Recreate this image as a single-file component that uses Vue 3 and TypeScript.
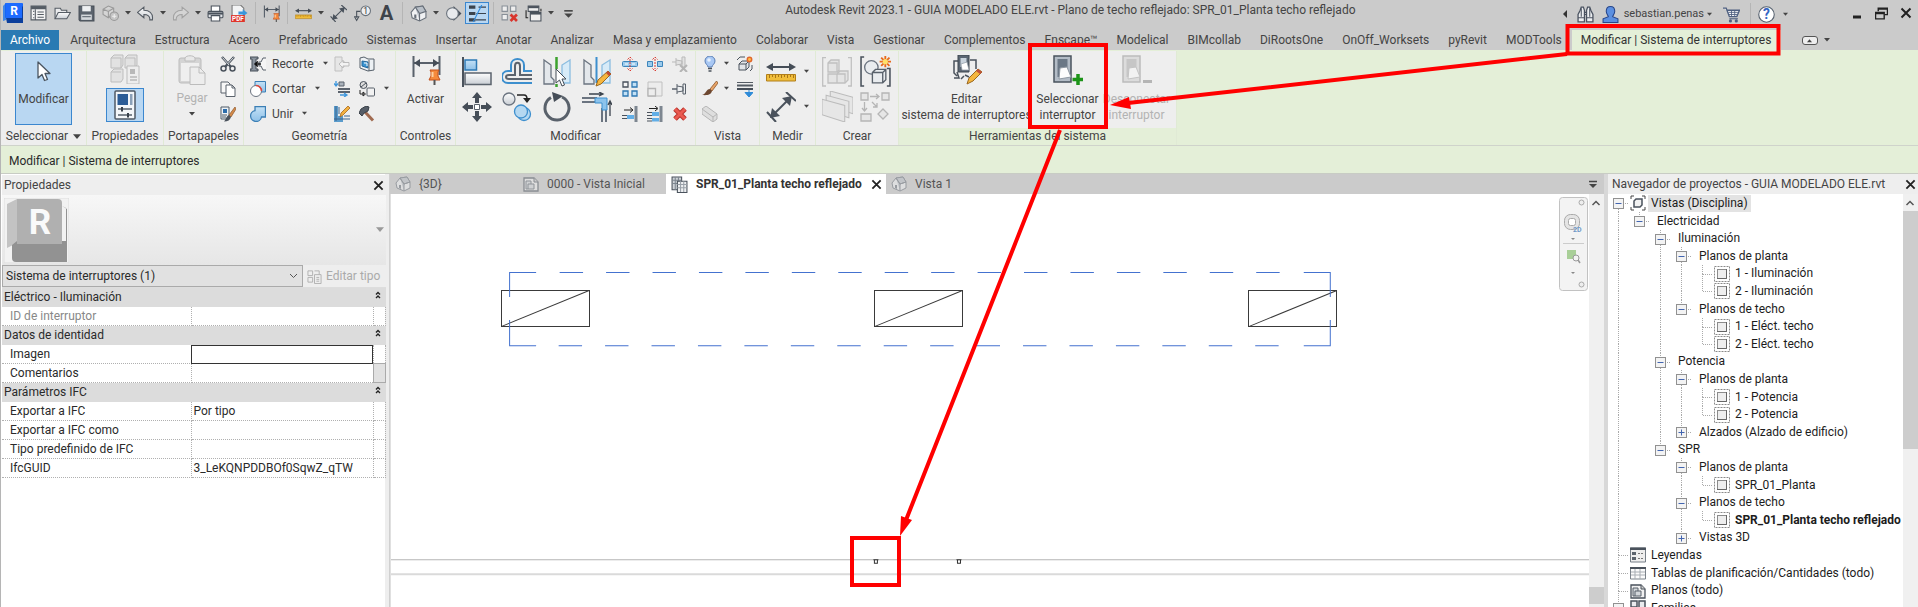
<script setup lang="ts">
import { h } from 'vue'

const Ico = (props: { n: string; s?: number }) =>
  h('svg', { width: props.s ?? 16, height: props.s ?? 16, 'aria-hidden': 'true', style: 'display:block;flex:none' }, [
    h('use', { href: '#' + props.n }),
  ])
Ico.props = ['n', 's']

interface QuickItem { kind: 'icon' | 'drop' | 'sep'; icon?: string; label?: string; on?: boolean }
const q = (icon: string, label: string, on = false): QuickItem => ({ kind: 'icon', icon, label, on })
const drop: QuickItem = { kind: 'drop', label: 'Más opciones' }
const sep: QuickItem = { kind: 'sep' }
const quick: QuickItem[] = [
  q('list', 'Inicio'), q('open', 'Abrir'), q('save', 'Guardar'), q('sync', 'Sincronizar'), drop,
  q('undo', 'Deshacer'), drop, q('redo', 'Rehacer'), drop, q('print', 'Imprimir'), q('pdf', 'Exportar PDF'), sep,
  q('dimpin', 'Activar controles'), sep, q('ruler', 'Medir'), drop, q('dim', 'Cota alineada'), q('tag', 'Etiqueta'),
  q('text', 'Texto'), sep, q('house', 'Vista 3D'), drop, q('section', 'Sección'), q('thin', 'Líneas finas', true), sep,
  q('closeviews', 'Cerrar inactivas'), q('switch', 'Cambiar ventanas'), drop, q('more', 'Personalizar'),
]

const tabs = [
  'Arquitectura', 'Estructura', 'Acero', 'Prefabricado', 'Sistemas', 'Insertar', 'Anotar', 'Analizar',
  'Masa y emplazamiento', 'Colaborar', 'Vista', 'Gestionar', 'Complementos', 'Enscape™', 'Modelical',
  'BIMcollab', 'DiRootsOne', 'OnOff_Worksets', 'pyRevit', 'MODTools',
]

const bigModify = [
  ['align', 'Alinear'], ['offset', 'Desfase'], ['mirrorpick', 'Reflejar eje'], ['mirrordraw', 'Reflejar dibujo'],
  ['move', 'Desplazar'], ['copyobj', 'Copiar'], ['rotate', 'Girar'], ['trim', 'Recortar'],
]
const smallModify = [
  ['split', 'Dividir'], ['splitgap', 'Dividir con hueco'], ['unpin', 'Desbloquear'],
  ['array', 'Matriz'], ['scale', 'Escala'], ['pin', 'Bloquear'],
  ['ext1', 'Extender uno'], ['ext2', 'Extender varios'], ['del', 'Suprimir'],
]

interface Prop { name: string; value?: string; off?: boolean; box?: boolean; btn?: boolean }
const groups: { title: string; rows: Prop[] }[] = [
  { title: 'Eléctrico - Iluminación', rows: [{ name: 'ID de interruptor', off: true }] },
  { title: 'Datos de identidad', rows: [{ name: 'Imagen', box: true }, { name: 'Comentarios', btn: true }] },
  {
    title: 'Parámetros IFC',
    rows: [
      { name: 'Exportar a IFC', value: 'Por tipo' }, { name: 'Exportar a IFC como' },
      { name: 'Tipo predefinido de IFC' }, { name: 'IfcGUID', value: '3_LeKQNPDDBOf0SqwZ_qTW' },
    ],
  },
]

// Guide codes, one per indent column: m/M/v minus box, P plus box, t tee, l elbow, | line, . empty
interface Node { g: string; text: string; icon?: string; bold?: boolean; sel?: boolean }
const tree: Node[] = [
  { g: 'v', text: 'Vistas (Disciplina)', icon: 'views', sel: true },
  { g: '|M', text: 'Electricidad' },
  { g: '|.m', text: 'Iluminación' },
  { g: '|.|m', text: 'Planos de planta' },
  { g: '|.||t', text: '1 - Iluminación', icon: 'plan' },
  { g: '|.||l', text: '2 - Iluminación', icon: 'plan' },
  { g: '|.|M', text: 'Planos de techo' },
  { g: '|.|.t', text: '1 - Eléct. techo', icon: 'plan' },
  { g: '|.|.l', text: '2 - Eléct. techo', icon: 'plan' },
  { g: '|.m', text: 'Potencia' },
  { g: '|.|m', text: 'Planos de planta' },
  { g: '|.||t', text: '1 - Potencia', icon: 'plan' },
  { g: '|.||l', text: '2 - Potencia', icon: 'plan' },
  { g: '|.|P', text: 'Alzados (Alzado de edificio)' },
  { g: '|.M', text: 'SPR' },
  { g: '|..m', text: 'Planos de planta' },
  { g: '|..|l', text: 'SPR_01_Planta', icon: 'plan' },
  { g: '|..m', text: 'Planos de techo' },
  { g: '|..|l', text: 'SPR_01_Planta techo reflejado', icon: 'plan', bold: true },
  { g: '|..P', text: 'Vistas 3D' },
  { g: 't', text: 'Leyendas', icon: 'legend' },
  { g: 't', text: 'Tablas de planificación/Cantidades (todo)', icon: 'table' },
  { g: 't', text: 'Planos (todo)', icon: 'sheet' },
  { g: 'm', text: 'Familias', icon: 'family' },
]
const up = (c: string) => 'mMPtl|'.includes(c)
const down = (c: string) => 'mvt|'.includes(c)
const stub = (c: string) => 'mMPvtl'.includes(c)
const box = (c: string) => 'mMPv'.includes(c)
</script>

<template>
  <div class="app">
    <svg class="defs" aria-hidden="true">
      <defs>
        <linearGradient id="gr" x2="0" y2="1"><stop offset="0" stop-color="#fdfdfd" /><stop offset="1" stop-color="#c9ced4" /></linearGradient>
        <linearGradient id="gb" x2="0" y2="1"><stop offset="0" stop-color="#c4e1f6" /><stop offset="1" stop-color="#8fc1e8" /></linearGradient>
      </defs>
    </svg>
    <svg class="symbols" aria-hidden="true">
      <symbol id="logo" viewBox="0 0 22 22"><path d="M0 4L3 1V18L0 19z" fill="#3f86e8" /><rect x="2" y="1" width="18" height="15" rx="1" fill="#1565f5" /><path d="M3 16H18V3L20 5V21H4z" fill="#0c3f9c" /><path d="M3 1H19V16H3z" fill="#1d6bff" /><text x="11" y="13" text-anchor="middle" font-family="Roboto, sans-serif" font-weight="700" font-size="12" fill="#fff">R</text></symbol>
      <symbol id="list" viewBox="0 0 16 16"><path d="M1 1H15V14H1z" fill="#f4f4f4" stroke="#555c64" /><path d="M1 1H15V4H1z" fill="#555c64" /><path d="M5 4V14M3 6h1M3 9h1M3 12h1M7 6.500h6M7 9h6M7 11.500h6" stroke="#555c64" /></symbol>
      <symbol id="open" viewBox="0 0 16 16"><path d="M1 13V3H6L7 5H12V7" fill="#e9eaec" stroke="#555c64" /><path d="M1 13L4 7H15.500L12 13z" fill="url(#gr)" stroke="#555c64" /></symbol>
      <symbol id="save" viewBox="0 0 16 16"><path d="M1 1H15V15H2L1 14z" fill="#5b636d" stroke="#474e57" /><path d="M4 1H12V6H4z" fill="#eef0f2" /><path d="M3 9H13V14H3z" fill="#d4d8dc" /><path d="M4 11H12" stroke="#5b636d" /></symbol>
      <symbol id="sync" viewBox="0 0 16 16"><path d="M1 4L6 1L11 3V8L6 12L1 9zM1 4L6 6L11 3M6 6V12" fill="#d5d5d5" stroke="#9a9a9a" /><circle cx="11.500" cy="10.500" r="4" fill="#c4c4c4" stroke="#989898" /><path d="M9.500 10.500h4m-2-2v4" stroke="#eee" /></symbol>
      <symbol id="undo" viewBox="0 0 16 16"><path d="M0.500 7L6.500 2V5C11 5 15.500 7 14.500 14H12C12.500 10.500 10 9 6.500 9V12z" fill="url(#gr)" stroke="#555c64" /></symbol>
      <symbol id="redo" viewBox="0 0 16 16"><path d="M15.500 7L9.500 2V5C5 5 0.500 7 1.500 14H4C3.500 10.500 6 9 9.500 9V12z" fill="#d4d4d4" stroke="#a2a2a2" /></symbol>
      <symbol id="print" viewBox="0 0 16 16"><path d="M4 6V1H12V6" fill="#fff" stroke="#4a525c" /><rect x="1" y="6" width="14" height="6" rx="1" fill="#dfe2e6" stroke="#4a525c" /><path d="M1 7H15V9H1z" fill="#4a525c" /><path d="M4 10H12V15H4z" fill="#fff" stroke="#4a525c" /></symbol>
      <symbol id="pdf" viewBox="0 0 16 16"><path d="M1 0H9L12 3V16H1z" fill="#f3f4f5" stroke="#777" /><path d="M7 6H11V4L15.500 7.500L11 11V9H7z" fill="#3a96db" /><path d="M0 9.500H13V16H0z" fill="#e0352b" /><text x="6.500" y="15" text-anchor="middle" font-family="Roboto, sans-serif" font-weight="700" font-size="6" fill="#fff">PDF</text></symbol>
      <symbol id="dimpin" viewBox="0 0 30 30"><path d="M2.500 1V22M28.500 1V20M3 8H28" stroke="#59616b" stroke-width="2" /><path d="M3 8L9 4V12zM28 8L22 4V12z" fill="#454d57" /><path d="M19 15H28L27 17V21L29 25H18L20 21V17z" fill="#f58a3c" stroke="#c2501c" /><path d="M23.500 25V30" stroke="#555" stroke-width="2" /><path d="M21.500 17V22" stroke="#ffd0a0" stroke-width="2" /></symbol>
      <symbol id="ruler" viewBox="0 0 30 20"><path d="M3 5H27" stroke="#454d57" stroke-width="2" /><path d="M0 5L7 1V9zM30 5L23 1V9z" fill="#454d57" /><path d="M0.500 12.500H29.500V19H0.500z" fill="#f0bd3a" stroke="#b17e1a" /><path d="M3.500 13V16M6.500 13V15M9.500 13V16M12.500 13V15M15.500 13V16M18.500 13V15M21.500 13V16M24.500 13V15M27.500 13V16" stroke="#a87517" /></symbol>
      <symbol id="dim" viewBox="0 0 30 30"><path d="M5 25L25 5" stroke="#4a525c" stroke-width="2" /><path d="M4 26L6 16L14 24zM26 4L16 6L24 14z" fill="#4a525c" /><path d="M1 20L10 30M20 0L30 9" stroke="#4a525c" stroke-width="2" /></symbol>
      <symbol id="tag" viewBox="0 0 16 16"><circle cx="11" cy="5.500" r="4.500" fill="#eef0f2" stroke="#69717b" /><path d="M6 6H2.500V12M0.500 11L2.500 14.500L4.500 11z" fill="none" stroke="#4a525c" /><text x="11" y="8.500" text-anchor="middle" font-family="Roboto, sans-serif" font-size="8" fill="#333">1</text></symbol>
      <symbol id="text" viewBox="0 0 16 16"><text x="8" y="14.500" text-anchor="middle" font-family="Roboto, sans-serif" font-weight="700" font-size="19" fill="#3f444a">A</text></symbol>
      <symbol id="house" viewBox="0 0 16 16"><path d="M1 7L5 2L12 1L15 6V12L9 15L2 12z" fill="#f0f1f3" stroke="#666e78" /><path d="M5 2L9 8V15M9 8L15 6M5 2L12 1L15 6L9 8z" fill="#b8bfc7" stroke="#666e78" /><path d="M4 9H6V13L4 12z" fill="#666e78" /></symbol>
      <symbol id="section" viewBox="0 0 16 16"><path d="M8 1V15L15.500 8z" fill="#4a525c" /><path d="M7 2L1 8L7 14z" fill="#8d959e" /><circle cx="7" cy="8" r="5.500" fill="#e8eaed" stroke="#68707a" /></symbol>
      <symbol id="thin" viewBox="0 0 16 16"><path d="M0 2H6M0 8H6M0 14H6" stroke="#3b434d" stroke-width="3" /><path d="M9 2H16M7 8H16M6 14H16" stroke="#3b434d" /><path d="M12 0L4 16" stroke="#2e8be0" /></symbol>
      <symbol id="closeviews" viewBox="0 0 16 16"><path d="M1 1H6V6H1zM9 1H14V6H9zM1 9H6V14H1z" fill="#eee" stroke="#888f97" /><path d="M9 9L15 15M15 9L9 15" stroke="#d8352d" stroke-width="2.500" /></symbol>
      <symbol id="switch" viewBox="0 0 16 16"><path d="M3 1H13V6H3z" fill="#f0f0f0" stroke="#4a525c" /><path d="M3 1H13V3H3z" fill="#4a525c" /><path d="M5 7H15V15H5z" fill="#f0f0f0" stroke="#4a525c" /><path d="M5 7H15V9H5z" fill="#4a525c" /><path d="M3 12H1V5M15 3.500V6" stroke="#222" fill="none" /></symbol>
      <symbol id="more" viewBox="0 0 16 16"><path d="M4 5.500H12" stroke="#444" stroke-width="1.500" /><path d="M4 8H12L8 12z" fill="#444" /></symbol>
      <symbol id="down" viewBox="0 0 6 4"><path d="M0 0H6L3 3.500z" fill="#444" /></symbol>
      <symbol id="downgrey" viewBox="0 0 6 4"><path d="M0 0H6L3 3.500z" fill="#999" /></symbol>
      <symbol id="left" viewBox="0 0 6 8"><path d="M5 0V8L1 4z" fill="#333" /></symbol>
      <symbol id="binoc" viewBox="0 0 16 16"><path d="M3 4L4 1H6L7 4V15H1V8zM13 4L12 1H10L9 4V15H15V8z" fill="#eceef0" stroke="#4a5260" stroke-width="1.200" /><path d="M1 11H7M9 11H15M7 6H9M7 8H9M4 2V10M12 2V10" stroke="#4a5260" /></symbol>
      <symbol id="user" viewBox="0 0 16 16"><path d="M4 5C4 2 6 0.500 8 0.500S12 2 12 5S10 9 10 10L15 12V15.500H1V12L6 10C6 9 4 8 4 5z" fill="#5b8fe0" stroke="#26468c" /></symbol>
      <symbol id="cart" viewBox="0 0 16 16"><path d="M0 2H3L6 10H13L15.500 4H4" fill="#f1f3f7" stroke="#4e5f80" stroke-width="1.300" /><path d="M5 6H14M5.500 8H13.500M8 4V10M11 4V10" stroke="#4e5f80" stroke-width="0.800" /><path d="M6 12H14" stroke="#4e5f80" /><circle cx="7" cy="14" r="1.500" fill="#4e5f80" /><circle cx="12.500" cy="14" r="1.500" fill="#4e5f80" /></symbol>
      <symbol id="help" viewBox="0 0 16 16"><circle cx="8" cy="8" r="7.300" fill="#fff" stroke="#55606e" /><text x="8" y="12.500" text-anchor="middle" font-family="Roboto, sans-serif" font-weight="700" font-size="13" fill="#3465c4">?</text></symbol>
      <symbol id="min" viewBox="0 0 12 12"><path d="M2 10H10" stroke="#222" stroke-width="3" /></symbol>
      <symbol id="restore" viewBox="0 0 12 12"><path d="M3 4V1H11.500V7H9M3 2H11" fill="none" stroke="#222" stroke-width="1.300" /><path d="M0.500 5H8.500V11H0.500zM1 6H8" fill="none" stroke="#222" stroke-width="1.300" /></symbol>
      <symbol id="x" viewBox="0 0 12 12"><path d="M1.500 1.500L10.500 10.500M10.500 1.500L1.500 10.500" stroke="#222" stroke-width="2" /></symbol>

      <symbol id="cursor" viewBox="0 0 20 26"><path d="M4 3V19L8 15.500L10.500 21.500L13.500 20.500L11 14.500H16z" fill="#fff" stroke="#4b5560" stroke-width="1.300" stroke-linejoin="round" /></symbol>
      <symbol id="typeprops" viewBox="0 0 30 30"><g fill="#e2e2e2" stroke="#bdbdbd"><path d="M1 4L4 1H13V11L11 14H1zM15 4L18 1H27V11L25 14H15zM1 18L4 15H13V25L11 28H1z" /><path d="M1 4H11V14M15 4H25V14M1 18H11" fill="none" /><path d="M17 12H29V30H17z" fill="#ededed" /></g><path d="M20 15H25V20H20z" fill="#b8b8b8" /><path d="M20 23H27M20 26H27" stroke="#b8b8b8" stroke-width="1.500" /></symbol>
      <symbol id="props" viewBox="0 0 22 30"><rect x="1" y="1" width="20" height="28" rx="1" fill="#f3f6f9" stroke="#4f5a66" stroke-width="1.500" /><path d="M3.500 4H14V15H3.500z" fill="#2b5c96" /><path d="M16 4H18.500V15H16z" fill="#8aa0b8" /><path d="M4 19H18M4 25H18" stroke="#56606b" stroke-width="1.500" /><path d="M8 17V21.500M14 23V27.500" stroke="#38414b" stroke-width="2" /></symbol>
      <symbol id="paste" viewBox="0 0 30 30"><rect x="2" y="3" width="22" height="25" rx="2" fill="#d4d4d4" stroke="#bcbcbc" /><path d="M8 3C9 0 17 0 18 3V6H8z" fill="#e8e8e8" stroke="#bcbcbc" /><path d="M4 8H22V26H4z" fill="#efefef" /><path d="M13 12H22L28 18V29.500H13z" fill="#ededed" stroke="#bcbcbc" /><path d="M22 12V18H28" fill="none" stroke="#bcbcbc" /></symbol>
      <symbol id="cut" viewBox="0 0 16 16"><path d="M2 1L11 11M14 1L5 11" stroke="#4a525c" stroke-width="2.500" /><path d="M2.500 1.500L9 9M13.500 1.500L8 7.500" stroke="#d9dde1" /><circle cx="3.500" cy="12.500" r="2.500" fill="none" stroke="#4a525c" stroke-width="1.500" /><circle cx="12.500" cy="12.500" r="2.500" fill="none" stroke="#4a525c" stroke-width="1.500" /></symbol>
      <symbol id="copy" viewBox="0 0 16 16"><path d="M1 1H8L10 3V12H1z" fill="#f7f7f7" stroke="#5b636d" /><path d="M6 4H12L15 7V15.500H6zM12 4V7H15" fill="#fff" stroke="#5b636d" /></symbol>
      <symbol id="match" viewBox="0 0 16 16"><path d="M1 1H9V13H1z" fill="#eef2f6" stroke="#4f5a66" /><path d="M3 3H7V7H3z" fill="#2b6cab" /><path d="M2 9H7M2 11H6" stroke="#4f5a66" /><path d="M15 1L9 9L11 11L16 3z" fill="#d48b4a" stroke="#8b552a" stroke-width="0.700" /><path d="M9 9L11 11C10 14 8 15.500 4 15.500C6 14 6 10 9 9z" fill="#4a525c" /></symbol>
      <symbol id="cope" viewBox="0 0 16 16"><path d="M0 1H8V3H6V13H8V15H0V13H2V3H0z" fill="#8b949e" stroke="#454d57" /><path d="M16 2H13L11 6H9V10H11L13 14H16" fill="#f5f5f5" stroke="#59616b" /><path d="M11 8H6M8 5.500L5 8L8 10.500" stroke="#111" stroke-width="1.500" fill="none" /></symbol>
      <symbol id="cutgeo" viewBox="0 0 16 16"><path d="M5 0.500H15.500V11H5z" fill="url(#gb)" stroke="#3c7fb5" /><circle cx="6" cy="10" r="5.500" fill="#fff" stroke="#6b7480" /><path d="M6 4.500A5.500 5.500 0 0 1 11.500 10" fill="none" stroke="#e2453c" stroke-width="1.500" /></symbol>
      <symbol id="joingeo" viewBox="0 0 16 16"><path d="M5 0.500H15.500V11H11.500A5.500 5.500 0 1 1 5 4.600z" fill="url(#gb)" stroke="#3c7fb5" stroke-width="1.300" /></symbol>
      <symbol id="join1" viewBox="0 0 16 16"><path d="M1 1H8V5H10V11H8V15H1z" fill="#e6e6e6" stroke="#c0c0c0" /><path d="M5 8L9 4.500V6.500H15V10H9V12z" fill="#f3f3f3" stroke="#bbb" /></symbol>
      <symbol id="beam" viewBox="0 0 16 16"><path d="M5 1H10V5H5z" fill="#aab2bb" stroke="#5b636d" /><path d="M4 8H16M4 11H16" stroke="#5b636d" stroke-width="2" /><path d="M2 0V4M0 2.500L2 5L4 2.500M6 14H12M10 12L13 14L10 16" stroke="#3f97dc" fill="none" stroke-width="1.300" /></symbol>
      <symbol id="wallopen" viewBox="0 0 16 16"><path d="M1 2L5 1L9 3H15V14L9 15L1 12z" fill="#edf1f4" stroke="#56606b" /><path d="M3 5L9 6V12L3 10z" fill="#3a94d1" stroke="#27689b" /><path d="M10 4V15" stroke="#56606b" /><path d="M5 7H8V10" stroke="#fff" fill="none" /></symbol>
      <symbol id="splitface" viewBox="0 0 16 16"><circle cx="4.500" cy="4" r="3.500" fill="#ddd" stroke="#4a525c" /><path d="M2 6L7 2" stroke="#4a525c" /><rect x="8" y="7" width="7.500" height="8" rx="1" fill="#f2f2f2" stroke="#59616b" /><path d="M1 9V13H5M4 11L6.500 13L4 15z" stroke="#222" fill="none" /></symbol>
      <symbol id="paint" viewBox="0 0 16 16"><path d="M0 0H4V10H9V16H0z" fill="#5b9ccc" /><path d="M2 0V15M5 1V8M0 13H16M10 10H16" stroke="#3b638c" /><path d="M6 11L7 7L14 0L16 2L9 9z" fill="#f3b13f" stroke="#a6661c" stroke-width="0.800" /></symbol>
      <symbol id="hammer" viewBox="0 0 16 16"><path d="M6 6L14 14.500" stroke="#a06a50" stroke-width="3" /><path d="M0 7L2 3L7 0L10 1L9 5L5 7L3 10z" fill="#565e68" stroke="#383f47" /></symbol>

      <symbol id="align" viewBox="0 0 30 30"><path d="M1 0V30" stroke="#4a525c" stroke-width="2" /><path d="M3 3H14.500V13H3z" fill="url(#gb)" stroke="#2e7ab5" stroke-width="1.500" /><path d="M3 16H29V27.500H3z" fill="url(#gr)" stroke="#5b636d" stroke-width="1.500" /></symbol>
      <symbol id="offset" viewBox="0 0 30 30"><path d="M30 14H22V8C22 0 9 0 9 8V14H6C-2 14-2 26 6 26H30" fill="none" stroke="#3d8fce" stroke-width="2" /><path d="M30 18H18V9C18 4.500 13 4.500 13 9V18H7C3 18 3 22 7 22H30" fill="none" stroke="#5b636d" stroke-width="2" /></symbol>
      <symbol id="mirrorpick" viewBox="0 0 30 30"><path d="M2 3L9 8V20L12 23V27H2z" fill="#e3e7eb" stroke="#6b7480" stroke-width="1.300" /><path d="M28 3L20 8V26H28z" fill="#d7ebf8" stroke="#8bbde0" stroke-width="1.300" /><path d="M14.500 0V12M14.500 27V30" stroke="#3da22e" stroke-width="2.500" /><path d="M14 12V26L17.500 23L20 29L22.500 28L20 22H24z" fill="#fff" stroke="#444d57" /></symbol>
      <symbol id="mirrordraw" viewBox="0 0 30 30"><path d="M2 3L9 8V20L12 23V27H2z" fill="#e3e7eb" stroke="#6b7480" stroke-width="1.300" /><path d="M28 3L20 8V26H28z" fill="#d7ebf8" stroke="#8bbde0" stroke-width="1.300" /><path d="M14.500 0V26" stroke="#3d8fce" stroke-width="2" /><path d="M14 29L16 23L26 14L29 17L19 27z" fill="#f5b63f" stroke="#9a6820" /><path d="M26 14L29 17L27 19L24 16z" fill="#c04a35" /></symbol>
      <symbol id="move" viewBox="0 0 30 30"><path d="M15 0L20 6H17V11H13V6H10zM15 30L20 24H17V19H13V24H10zM0 15L6 10V13H11V17H6V20zM30 15L24 10V13H19V17H24V20z" fill="#454d57" /><path d="M12.500 12.500H17.500V17.500H12.500z" fill="#fff" stroke="#59616b" /></symbol>
      <symbol id="copyobj" viewBox="0 0 30 30"><circle cx="7" cy="7" r="6" fill="url(#gr)" stroke="#6b7480" stroke-width="1.300" /><circle cx="22" cy="22" r="6.500" fill="#b5d8f1" stroke="#3d8fce" stroke-width="1.300" /><circle cx="19" cy="19.500" r="6.500" fill="#b5d8f1" stroke="#3d8fce" stroke-width="1.300" /><path d="M15 3H22C24 3 25 5 25 7" fill="none" stroke="#222" stroke-width="1.500" /><path d="M21 6H29L25 11z" fill="#222" /></symbol>
      <symbol id="rotate" viewBox="0 0 30 30"><path d="M20 5A12 12 0 1 1 9 5.500" fill="none" stroke="#59616b" stroke-width="3" /><path d="M10 0L21 4L12 10z" fill="#454d57" /></symbol>
      <symbol id="trim" viewBox="0 0 30 30"><path d="M0 6H15M0 10H15M20 16V30M24 16V30" stroke="#6b7480" stroke-width="2" /><path d="M13 6H25V18H20V11H13z" fill="#8cc3ec" stroke="#3d8fce" /><path d="M7 2H20M17 0L21 2L17 4M28 24V10M26 13L28 9L30 13" stroke="#3b434d" fill="none" stroke-width="1.300" /></symbol>
      <symbol id="split" viewBox="0 0 16 16"><rect x="0.500" y="5.500" width="15" height="5" rx="1" fill="#9ccbec" stroke="#3d85bb" /><path d="M3 8H6M10 8H13" stroke="#fff" /><path d="M8 3V13M5.500 3.500L8 1L10.500 3.500M5.500 12.500L8 15L10.500 12.500" fill="none" stroke="#db3b32" stroke-dasharray="2 1" /></symbol>
      <symbol id="splitgap" viewBox="0 0 16 16"><path d="M0.500 5.500H5.500V10.500H0.500zM10.500 5.500H15.500V10.500H10.500z" fill="#9ccbec" stroke="#3d85bb" /><path d="M8 3V13M5.500 3.500L8 1L10.500 3.500M5.500 12.500L8 15L10.500 12.500" fill="none" stroke="#db3b32" stroke-dasharray="2 1" /></symbol>
      <symbol id="unpin" viewBox="0 0 16 16"><path d="M0 6H4M4 2V10M4 4L10 5V8L4 9M10 1V11H13V1z" fill="#e2e2e2" stroke="#b9b9b9" /><path d="M8 9L15 16M15 9L8 16" stroke="#b4b4b4" stroke-width="2" /></symbol>
      <symbol id="pin" viewBox="0 0 16 16"><path d="M0 8H5" stroke="#59616b" stroke-width="1.500" /><path d="M5 3V13M5 5L11 6V10L5 11M11 3V13H13.500V3z" fill="#edeff1" stroke="#59616b" /></symbol>
      <symbol id="array" viewBox="0 0 16 16"><path d="M1 1H6V6H1z" fill="#f5f5f5" stroke="#4a525c" stroke-width="1.300" /><path d="M10 1H15V6H10zM1 10H6V15H1zM10 10H15V15H10z" fill="#c3e1f6" stroke="#2e78b3" stroke-width="1.300" /></symbol>
      <symbol id="scale" viewBox="0 0 16 16"><path d="M1 1H15V15H1z" fill="#ececec" stroke="#c0c0c0" /><path d="M1 7.500H8.500V15H1z" fill="#ededed" stroke="#b5b5b5" stroke-width="1.300" /></symbol>
      <symbol id="ext1" viewBox="0 0 16 16"><path d="M14 0V16" stroke="#7d8690" stroke-width="3" /><path d="M0 9.500H5M0 12.500H5" stroke="#4a525c" /><path d="M5 9H12V13H5z" fill="#62aee6" /><path d="M2 4H10M8 1.500L11 4L8 6.500" stroke="#222" fill="none" /></symbol>
      <symbol id="ext2" viewBox="0 0 16 16"><path d="M14 0V16" stroke="#7d8690" stroke-width="3" /><path d="M0 6.500H5M0 9.500H5M0 12.500H5M0 15H5" stroke="#4a525c" /><path d="M5 6H12V10H5zM5 12H12V15.500H5z" fill="#62aee6" /><path d="M2 2.500H10M8 0L11 2.500L8 5" stroke="#222" fill="none" /></symbol>
      <symbol id="del" viewBox="0 0 16 16"><path d="M3 3L13 13M13 3L3 13" stroke="#b9332b" stroke-width="5" /><path d="M3 3L13 13M13 3L3 13" stroke="#ea5a50" stroke-width="3" /></symbol>
      <symbol id="bulb" viewBox="0 0 16 16"><path d="M6 11C6 9 3 8 3 5A5 5 0 0 1 13 5C13 8 10 9 10 11z" fill="#a9c8f4" stroke="#5b7fb5" /><circle cx="7" cy="4" r="1.800" fill="#e6f0fd" /><path d="M6 12.500H10M6.500 15H9.500" stroke="#4a525c" stroke-width="1.500" /></symbol>
      <symbol id="boxview" viewBox="0 0 16 16"><path d="M2 8L5 5H12V11L9 14H2zM2 8H9V14M9 8L12 5" fill="#e2e5e8" stroke="#4a525c" /><path d="M0 4L3 1H8M15 9V13L13 15" fill="none" stroke="#4a525c" /><circle cx="12.500" cy="3.500" r="2.200" fill="#ffc04a" stroke="#e0672c" stroke-width="1.500" /></symbol>
      <symbol id="brush" viewBox="0 0 16 16"><path d="M14.500 0L8 8L10 10L16 2z" fill="#e8a469" stroke="#8b552a" stroke-width="0.800" /><path d="M8 8L10 10C9 14 5 14.500 0 14C4 13 4 8 8 8z" fill="#6d4730" /></symbol>
      <symbol id="lines" viewBox="0 0 16 16"><path d="M0 1.500H16" stroke="#555c64" /><path d="M0 4.500H16" stroke="#555c64" stroke-width="2" /><path d="M0 8H16" stroke="#454d57" stroke-width="2" /><path d="M12 9V12M8 11.500H16L12 16z" fill="#2f8bd8" stroke="#2f8bd8" /></symbol>
      <symbol id="ghost" viewBox="0 0 16 16"><path d="M0 3L4 0L15 8V13L11 16L0 8zM0 3L11 11V16M11 11L15 8" fill="#dedede" stroke="#b5b5b5" /></symbol>
      <symbol id="group" viewBox="0 0 30 30"><g fill="#e4e4e4" stroke="#c0c0c0" stroke-width="1.300"><path d="M4 0.700H0.700V29H4M26 0.700H29.300V29H26" fill="none" /><path d="M6 6L9 3H17V13L15 15H6zM6 17H15V26H6zM15 17L18 14H26V23L23 26H15z" /><path d="M6 6H15V15M15 17H23V26" fill="none" /></g></symbol>
      <symbol id="assembly" viewBox="0 0 30 30"><path d="M4 1H1V29H4M26 12H29V29H26" fill="none" stroke="#4a525c" stroke-width="1.500" /><circle cx="11" cy="11" r="6.500" fill="#e9ecef" stroke="#6b7480" stroke-width="1.300" /><path d="M12 16L15 13H25V23L22 26H12zM12 16H22V26M22 16L25 13" fill="#e9ecef" stroke="#59616b" stroke-width="1.300" /><path d="M24.500 0V11M19 5.500H30M20.500 1.500L28.500 9.500M28.500 1.500L20.500 9.500" stroke="#e8691b" stroke-width="1.800" /><circle cx="24.500" cy="5.500" r="2.500" fill="#ffe06a" /></symbol>
      <symbol id="sheets3" viewBox="0 0 30 30"><g fill="#e6e6e6" stroke="#bcbcbc"><path d="M8 0L30 6V22L8 15z" /><path d="M4 4L26 10V26L4 19z" /><path d="M0 8L22 14V30L0 23z" /></g></symbol>
      <symbol id="flow" viewBox="0 0 30 30"><g fill="#e6e6e6" stroke="#b5b5b5" stroke-width="1.300"><path d="M1 1H8V8H1zM22 1H29V8H22zM1 22H11V29H1zM23 17L28 22L23 27L18 22z" /><path d="M10 4.500H19M16 2L19 4.500L16 7M4.500 10V18M2 16L4.500 19L7 16M12 10L17 15M17 11V15H13" fill="none" /></g></symbol>
      <symbol id="editsw" viewBox="0 0 30 30"><path d="M7 6H2V18L5 21M18 5H24V14M9 24L12 21M5 17L7 23H2M13 20L17 22" fill="none" stroke="#4a525c" stroke-width="1.500" /><path d="M6 0H17V17H6z" fill="#5b6673" stroke="#3e4751" /><path d="M8.500 3H14.500V12H8.500z" fill="#c9d3dd" /><path d="M9 9L15 7L17 15H10z" fill="#fff" stroke="#8f99a3" stroke-width="0.700" /><path d="M15 29L17 23L26 14L30 17L21 26z" fill="#f5b63f" stroke="#9a6820" /><path d="M26 14L30 17L28 19L24 16z" fill="#c0503a" /></symbol>
      <symbol id="selsw" viewBox="0 0 30 30"><path d="M1 1H18V27H1z" fill="#b3bcc6" stroke="#4a535d" stroke-width="1.500" /><path d="M4.500 4H14.500V22H4.500z" fill="#6b7886" /><path d="M7 13L14 12L18 22L6 24z" fill="#fdfdfd" stroke="#8f99a3" /><path d="M25 19V30M19.500 24.500H30.500" stroke="#1d9418" stroke-width="3.500" /></symbol>
      <symbol id="offsw" viewBox="0 0 30 30"><path d="M1 1H18V27H1z" fill="#dcdcdc" stroke="#bcbcbc" stroke-width="1.500" /><path d="M4.500 4H14.500V22H4.500z" fill="#c6c6c6" /><path d="M7 13L14 12L18 22L6 24z" fill="#f2f2f2" stroke="#c4c4c4" /><path d="M21 26.500H30" stroke="#b5b5b5" stroke-width="3" /></symbol>

      <symbol id="plan" viewBox="0 0 16 16"><rect x="0.500" y="0.500" width="15" height="15" fill="#fff" stroke="#8a8a8a" stroke-dasharray="2 1" /><rect x="3.500" y="3.500" width="9" height="9" fill="#eee" stroke="#8c8c8c" /><path d="M12.500 3V12.500H3" fill="none" stroke="#666" /></symbol>
      <symbol id="views" viewBox="0 0 16 16"><path d="M1 4V1H4M12 1H15V4M15 12V15H12M4 15H1V12" fill="none" stroke="#444" /><path d="M4 6L6 4H12V10L10 12H4z" fill="#f2f2f2" stroke="#4a525c" stroke-width="1.500" /></symbol>
      <symbol id="legend" viewBox="0 0 16 16"><path d="M0.500 1H15.500V15H0.500z" fill="#eee" stroke="#777f88" /><path d="M0 0.500H16V3H0z" fill="#4a525c" /><path d="M2 5H6V8H2zM2 10H6V13H2z" fill="#5b636d" /><path d="M8 6.500H14M8 11.500H14" stroke="#777" stroke-dasharray="2 1" /></symbol>
      <symbol id="table" viewBox="0 0 16 16"><path d="M0.500 2.500H15.500V14H0.500z" fill="#fbfbfb" stroke="#7b828a" /><path d="M0 2H16V4H0z" fill="#4a525c" /><path d="M1 7H15M1 10H15M5 4V14M10 4V14" stroke="#a9aeb4" /></symbol>
      <symbol id="sheet" viewBox="0 0 16 16"><path d="M1 2H11L15 6V15H1z" fill="#f1f1f1" stroke="#4a525c" stroke-width="1.300" /><path d="M11 2V6H15" fill="#ccc" stroke="#4a525c" /><path d="M3 5H8V8H11V13H3zM5 13V8H8" fill="#d3d7db" stroke="#59616b" /></symbol>
      <symbol id="family" viewBox="0 0 16 16"><path d="M1 1H7V7H1zM9 1H15V10H9zM1 9H7V15H1z" fill="#e9ebee" stroke="#4a525c" stroke-width="1.500" /></symbol>
      <symbol id="planset" viewBox="0 0 16 16"><path d="M1 1H10V13H1z" fill="#cfd3d8" stroke="#4a525c" /><path d="M1 4H10M1 7H10M4 1V13M7 1V13" stroke="#7d8690" /><path d="M6 5H15V15.500H6z" fill="#eef0f2" stroke="#4a525c" /><path d="M6 8H15M6 11H15M9 5V15M12 5V15" stroke="#9aa1a9" /></symbol>
      <symbol id="edittype" viewBox="0 0 16 16"><g fill="none" stroke="#b0b0b0"><path d="M1 2H6V7H1zM8 2H13V6M1 9H6V14H1zM8 6H15V15.500H8z" /><path d="M10 9H13M10 11H13M10 13H13" /></g></symbol>
    </svg>

    <header class="titlebar">
      <nav class="quick" aria-label="Acceso rápido">
        <button class="logo" aria-label="Revit"><Ico n="logo" :s="22" /></button>
        <template v-for="(i, k) in quick" :key="k">
          <span v-if="i.kind === 'sep'" class="sep"></span>
          <button v-else :class="[i.kind, { on: i.on }]" :aria-label="i.label"><Ico :n="i.icon ?? 'down'" :s="i.kind === 'drop' ? 6 : 17" /></button>
        </template>
      </nav>
      <h1>Autodesk Revit 2023.1 - GUIA MODELADO ELE.rvt - Plano de techo reflejado: SPR_01_Planta techo reflejado</h1>
      <div class="account">
        <button aria-label="Mostrar búsqueda"><Ico n="left" :s="8" /></button>
        <button aria-label="Buscar"><Ico n="binoc" :s="17" /></button>
        <button class="user"><Ico n="user" :s="17" /><span>sebastian.penas</span><Ico n="down" :s="5" /></button>
        <button aria-label="Tienda"><Ico n="cart" :s="17" /></button>
        <span class="sep"></span>
        <button class="help" aria-label="Ayuda"><Ico n="help" :s="17" /><Ico n="down" :s="5" /></button>
      </div>
      <div class="win">
        <button aria-label="Minimizar"><Ico n="min" :s="12" /></button>
        <button aria-label="Restaurar"><Ico n="restore" :s="13" /></button>
        <button aria-label="Cerrar"><Ico n="x" :s="12" /></button>
      </div>
    </header>

    <nav class="tabs" aria-label="Cinta de opciones">
      <button class="file">Archivo</button>
      <button v-for="t in tabs" :key="t">{{ t }}</button>
      <button class="context">Modificar | Sistema de interruptores</button>
      <button class="fold" aria-label="Minimizar cinta"><span class="pill"><Ico n="down" :s="5" /></span><Ico n="down" :s="6" /></button>
    </nav>

    <section class="ribbon">
      <div class="panel w-sel">
        <div class="body center"><button class="big on"><Ico n="cursor" :s="26" /><span>Modificar</span></button></div>
        <button class="label">Seleccionar <Ico n="down" :s="8" /></button>
      </div>
      <div class="panel w-prop">
        <div class="body stack">
          <button disabled aria-label="Propiedades de tipo"><Ico n="typeprops" :s="30" /></button>
          <button class="on toggle" aria-label="Propiedades"><Ico n="props" :s="30" /></button>
        </div>
        <div class="label">Propiedades</div>
      </div>
      <div class="panel w-clip">
        <div class="body row">
          <button class="tool paste" disabled><Ico n="paste" :s="30" /><span>Pegar</span><Ico n="down" :s="6" /></button>
          <div class="small">
            <button aria-label="Cortar al portapapeles"><Ico n="cut" /></button>
            <button aria-label="Copiar al portapapeles"><Ico n="copy" /></button>
            <button aria-label="Igualar tipo"><Ico n="match" /></button>
          </div>
        </div>
        <div class="label">Portapapeles</div>
      </div>
      <div class="panel w-geo">
        <div class="body small geo">
          <button class="wide"><Ico n="cope" /><span>Recorte</span><Ico n="down" :s="5" /></button>
          <button disabled aria-label="Uniones"><Ico n="join1" /></button>
          <button aria-label="Muro"><Ico n="wallopen" /></button><span></span>
          <button class="wide"><Ico n="cutgeo" /><span>Cortar</span><Ico n="down" :s="5" /></button>
          <button aria-label="Vigas"><Ico n="beam" /></button>
          <button aria-label="Dividir cara"><Ico n="splitface" /></button>
          <button aria-label="Más"><Ico n="down" :s="5" /></button>
          <button class="wide"><Ico n="joingeo" /><span>Unir</span><Ico n="down" :s="5" /></button>
          <button aria-label="Pintar"><Ico n="paint" /></button>
          <button aria-label="Derribar"><Ico n="hammer" /></button>
        </div>
        <div class="label">Geometría</div>
      </div>
      <div class="panel w-ctl">
        <div class="body center"><button class="tool"><Ico n="dimpin" :s="30" /><span>Activar</span></button></div>
        <div class="label">Controles</div>
      </div>
      <div class="panel w-mod">
        <div class="body row pad">
          <div class="large four"><button v-for="b in bigModify" :key="b[0]" :aria-label="b[1]"><Ico :n="b[0]" :s="30" /></button></div>
          <div class="small three"><button v-for="b in smallModify" :key="b[0]" :aria-label="b[1]"><Ico :n="b[0]" /></button></div>
        </div>
        <div class="label">Modificar</div>
      </div>
      <div class="panel w-view">
        <div class="body small view">
          <button class="wide" aria-label="Ocultar"><Ico n="bulb" /><Ico n="down" :s="5" /></button><button aria-label="Caja de referencia"><Ico n="boxview" /></button>
          <button class="wide" aria-label="Modificar gráficos"><Ico n="brush" /><Ico n="down" :s="5" /></button><button aria-label="Grosor de línea"><Ico n="lines" /></button>
          <button disabled aria-label="Desplazar elementos"><Ico n="ghost" /></button>
        </div>
        <div class="label">Vista</div>
      </div>
      <div class="panel w-med">
        <div class="body large pad">
          <button class="wide" aria-label="Medir distancia"><Ico n="ruler" :s="30" /><Ico n="down" :s="5" /></button>
          <button class="wide" aria-label="Cota alineada"><Ico n="dim" :s="30" /><Ico n="down" :s="5" /></button>
        </div>
        <div class="label">Medir</div>
      </div>
      <div class="panel w-cre">
        <div class="body large two pad">
          <button disabled aria-label="Crear grupo"><Ico n="group" :s="30" /></button>
          <button aria-label="Crear ensamblaje"><Ico n="assembly" :s="31" /></button>
          <button disabled aria-label="Crear piezas"><Ico n="sheets3" :s="31" /></button>
          <button disabled aria-label="Crear similar"><Ico n="flow" :s="30" /></button>
        </div>
        <div class="label">Crear</div>
      </div>
      <div class="panel w-sys">
        <div class="body row">
          <button class="tool edit"><Ico n="editsw" :s="30" /><span>Editar<br />sistema de interruptores</span></button>
          <button class="tool select"><Ico n="selsw" :s="30" /><span>Seleccionar<br />interruptor</span></button>
          <button class="tool drop-sw" disabled><Ico n="offsw" :s="30" /><span>Desconectar<br />interruptor</span></button>
        </div>
        <div class="label green">Herramientas del sistema</div>
      </div>
    </section>

    <div class="options">Modificar | Sistema de interruptores</div>

    <main class="work">
      <aside class="properties">
        <div class="ptitle"><span>Propiedades</span><button aria-label="Cerrar propiedades"><Ico n="x" :s="11" /></button></div>
        <div class="type">
          <svg class="thumb" viewBox="0 0 65 65" aria-hidden="true">
            <rect width="65" height="65" fill="#f2f2f2" stroke="#ddd" />
            <path d="M3 6L13 1V45L3 50z" fill="#c3c3c3" />
            <path d="M8 47L13 43H62V10L58 8L63 11V64H12Q8 64 8 60z" fill="#929292" />
            <path d="M13 1H54Q58 1 58 5V46H13z" fill="#b0b0b0" />
            <text x="36" y="36" text-anchor="middle" font-family="Roboto, sans-serif" font-weight="700" font-size="35" fill="#fafafa">R</text>
          </svg>
          <button aria-label="Selector de tipo"><Ico n="downgrey" :s="8" /></button>
        </div>
        <div class="filter">
          <div class="combo">
            <select aria-label="Filtro de propiedades"><option>Sistema de interruptores (1)</option></select>
            <svg width="9" height="6" aria-hidden="true"><path d="M1 1L4.500 4.500L8 1" fill="none" stroke="#555" /></svg>
          </div>
          <button disabled><Ico n="edittype" :s="15" /><span>Editar tipo</span></button>
        </div>
        <table>
          <colgroup><col class="c1" /><col /><col class="c3" /></colgroup>
          <tbody v-for="g in groups" :key="g.title">
            <tr class="group"><th colspan="3" scope="rowgroup"><div><span>{{ g.title }}</span><svg width="6" height="8" aria-hidden="true"><path d="M1 3.500L3 1.500L5 3.500M1 7L3 5L5 7" fill="none" stroke="#222" stroke-width="1.400" /></svg></div></th></tr>
            <tr v-for="r in g.rows" :key="r.name">
              <th scope="row" :class="{ off: r.off }">{{ r.name }}</th>
              <td :class="{ boxed: r.box }">{{ r.value }}</td>
              <td :class="{ btn: r.btn }"></td>
            </tr>
          </tbody>
        </table>
      </aside>

      <section class="docs">
        <div class="doctabs">
          <button class="t1"><Ico n="house" /><span>{3D}</span></button>
          <button class="t2"><Ico n="sheet" /><span>0000 - Vista Inicial</span></button>
          <button class="active"><Ico n="planset" :s="17" /><span>SPR_01_Planta techo reflejado</span><Ico n="x" :s="11" /></button>
          <button class="t4"><Ico n="house" /><span>Vista 1</span></button>
          <button class="all" aria-label="Todas las vistas"><Ico n="more" :s="16" /></button>
        </div>
        <div class="viewport">
          <div class="canvas">
            <svg class="drawing" viewBox="391 194 1197 413" preserveAspectRatio="xMinYMin meet" role="img" aria-label="Plano de techo">
              <g fill="none" stroke="#3a3a3a" shape-rendering="crispEdges">
                <rect v-for="x in [501, 874, 1248]" :key="x" :x="x" y="290.500" width="88" height="36" />
              </g>
              <path v-for="x in [501, 874, 1248]" :key="'d' + x" :d="`M${x} 326.500L${x + 88} 290.500`" stroke="#3a3a3a" fill="none" />
              <g fill="none" stroke="#4472cf">
                <path d="M536 272.500H509.500V297M536 345.500H509.500V320M1303 272.500H1329.500V297M1303 345.500H1329.500V320" />
                <path d="M559.500 272.500H1281M558.500 345.500H1281" stroke-dasharray="23.400 23" />
              </g>
              <path d="M391 559.500H1588" stroke="#b5b5b5" />
              <path d="M391 574H1588" stroke="#dadada" stroke-width="2" />
              <path d="M873 559.500H878M874 560V563H877V560M956 559.500H961M957 560V563H960V560" fill="none" stroke="#333" />
            </svg>
            <div class="navbar">
              <svg width="29" height="94" aria-label="Barra de navegación" role="img">
                <rect x="0.500" y="0.500" width="28" height="93" rx="3" fill="#f3f3f3" stroke="#c2c2c2" />
                <circle cx="22.500" cy="5.500" r="2.500" fill="#eee" stroke="#aaa" /><circle cx="22.500" cy="87.500" r="2.500" fill="#eee" stroke="#aaa" />
                <rect x="5.500" y="17.500" width="15" height="15" rx="6" fill="#e4e4e4" stroke="#aaa" /><rect x="9.500" y="21.500" width="7" height="7" rx="2" fill="#fff" stroke="#aaa" />
                <text x="14" y="35" font-family="Roboto, sans-serif" font-weight="700" font-size="7" fill="#6f9ac8">2D</text>
                <path d="M12 41H16L14 43zM12 75H16L14 77z" fill="#888" /><path d="M4 46.500H25" stroke="#ccc" />
                <path d="M8 53H17V62H8z" fill="#a9cf98" /><circle cx="17" cy="61" r="3" fill="#f3f3f3" stroke="#999" /><path d="M19 63L21 66" stroke="#999" stroke-width="1.500" />
              </svg>
            </div>
          </div>
          <div class="scroll"><svg width="10" height="8" aria-hidden="true"><path d="M1.500 6L5 2.500L8.500 6" fill="none" stroke="#555" stroke-width="1.500" /></svg><i></i></div>
        </div>
      </section>

      <aside class="browser">
        <div class="ptitle"><span>Navegador de proyectos - GUIA MODELADO ELE.rvt</span><button aria-label="Cerrar navegador"><Ico n="x" :s="11" /></button></div>
        <div class="bbody">
          <ul>
            <li v-for="(n, i) in tree" :key="i" :class="{ bold: n.bold }">
              <svg v-for="(c, k) in n.g" :key="k" class="cell" width="21" height="18" aria-hidden="true">
                <g fill="none" stroke="#aaa" stroke-dasharray="1 1">
                  <path v-if="up(c)" d="M10.500 0V9" /><path v-if="down(c)" d="M10.500 9V18" /><path v-if="stub(c)" d="M11 9.500H21" />
                </g>
                <g v-if="box(c)"><rect x="5.500" y="4.500" width="10" height="10" fill="#f3f3f3" stroke="#919191" /><path :d="c === 'P' ? 'M7.500 9.500H13.500M10.500 6.500V12.500' : 'M7.500 9.500H13.500'" stroke="#4265b0" /></g>
              </svg>
              <Ico v-if="n.icon" :n="n.icon" />
              <span :class="{ sel: n.sel, plain: !n.icon }">{{ n.text }}</span>
            </li>
          </ul>
          <div class="scroll tall"><svg width="10" height="8" aria-hidden="true"><path d="M1.500 6L5 2.500L8.500 6" fill="none" stroke="#555" stroke-width="1.500" /></svg><i></i></div>
        </div>
      </aside>
    </main>

    <svg class="marks" viewBox="0 0 1918 607" aria-hidden="true">
      <g fill="none" stroke="#f00" stroke-width="4">
        <rect x="1567.500" y="26" width="211" height="27.500" /><rect x="1030" y="45" width="76" height="82" /><rect x="852" y="538" width="47" height="47" />
        <path d="M1567 54L1128 103M1060 130L906 520" />
      </g>
      <path d="M1110 105L1129 97L1131 109zM900 536L901 516L912 520z" fill="#f00" />
    </svg>
  </div>
</template>

<style>
html, body { height: 100%; overflow: hidden; }
</style>

<style scoped>
.app { position: relative; display: flex; flex-direction: column; height: 100vh; overflow: hidden; box-sizing: border-box; border-left: 1px solid #b5b5b5; background: #cbcbcb; color: #444; font: 12px/16px Roboto, "Noto Sans", sans-serif; }
.defs { position: absolute; width: 0; height: 0; }
.symbols { display: none; }
button { display: flex; align-items: center; justify-content: center; margin: 0; padding: 0; border: 0; background: none; font: inherit; color: inherit; white-space: nowrap; }
button:disabled { color: #b3b3b3; }
.titlebar { display: flex; align-items: center; height: 30px; flex: none; }
.quick, .account, .win { display: flex; align-items: center; height: 26px; align-self: flex-start; }
.quick .logo { width: 25px; }
.quick .icon { width: 24px; height: 22px; }
.quick .drop { width: 11px; }
.sep { width: 8px; height: 22px; flex: none; background: linear-gradient(#b5b5b5, #b5b5b5) center / 1px 100% no-repeat; }
.on { background: #b9d7f2; box-shadow: inset 0 0 0 1px #3b87cf; }
h1 { flex: 1; align-self: flex-start; margin: 2px 0 0; font-size: 12px; font-weight: 400; text-align: center; white-space: nowrap; }
.account { gap: 8px; padding-top: 1px; }
.account .user { gap: 5px; }
.account .user span { margin-right: -2px; font-size: 11px; }
.account .user + button { margin-left: 3px; }
.account .help { gap: 8px; }
.account .sep { margin: 0 -4px 0 -2px; }
.win { width: 124px; justify-content: flex-end; gap: 12px; padding-right: 6px; }
.tabs { display: flex; height: 20px; flex: none; }
.tabs button { padding: 0 10px 0 9px; }
.tabs .file { padding: 0 9px; background: #2a7ab3; color: #fff; }
.tabs .file + button { margin-left: 2px; }
.tabs .context { background: #e4efd8; color: #333; }
.tabs .fold { gap: 6px; padding-left: 21px; }
.pill { display: grid; place-items: center; width: 14px; height: 7px; border: 1px solid #555; border-radius: 3px; background: #eee; transform: rotate(180deg); }
.ribbon { display: flex; flex: none; height: 96px; border-bottom: 1px solid #cfd3cb; border-top: 1px solid #e4efd8; box-sizing: border-box; background: #e4efd8; }
.panel { display: flex; flex-direction: column; flex: none; box-sizing: border-box; border-right: 1px solid #e0ead5; background: #eee; }
.body { flex: 1; min-height: 0; }
.label { height: 17px; justify-content: center; text-align: center; gap: 5px; line-height: 17px; white-space: nowrap; }
.label.green { background: #e4efd8; }
.w-sel { width: 86px; } .w-prop { width: 77px; } .w-clip { width: 80px; } .w-geo { width: 152px; } .w-ctl { width: 60px; }
.w-mod { width: 240px; } .w-view { width: 64px; } .w-med { width: 56px; } .w-cre { width: 83px; } .w-sys { width: 278px; }
.center { display: flex; justify-content: center; }
.row { display: flex; }
.big { flex-direction: column; justify-content: flex-start; gap: 6px; width: 57px; height: 72px; margin-top: 2px; padding-top: 6px; box-sizing: border-box; }
.stack { display: flex; flex-direction: column; align-items: center; gap: 4px; padding-top: 3px; }
.toggle { width: 38px; height: 34px; }
.tool { flex-direction: column; justify-content: flex-start; padding-top: 4px; gap: 6px; }
.tool span { line-height: 16px; }
.paste { width: 56px; gap: 5px; }
.small { display: grid; grid-auto-rows: 25px; align-content: start; }
.small button, .large button { justify-content: flex-start; }
.geo { grid-template-columns: 84px 25px 25px 1fr; padding-left: 6px; }
.wide { gap: 6px; }
.geo .wide span { margin-right: 3px; }
.pad { padding-left: 6px; }
.large { display: grid; grid-auto-rows: 35px; align-content: start; padding-top: 3px; }
.four { grid-template-columns: repeat(4, 40px); }
.three { grid-template-columns: repeat(3, 25px); }
.two { grid-template-columns: 38px 31px; }
.view { grid-template-columns: 35px 17px; padding-left: 6px; }
.large .wide { gap: 8px; }
.edit { width: 135px; } .select { width: 67px; } .drop-sw { width: 71px; }
.options { flex: none; display: flex; align-items: center; height: 28px; padding: 2px 0 0 8px; box-sizing: border-box; border-bottom: 1px solid #c8ccc4; background: #e4efd8; color: #2a2a2a; }
.work { display: flex; flex: 1; min-height: 0; }
.properties { display: flex; flex-direction: column; flex: none; width: 389px; padding: 1px 3px 0 1px; box-sizing: border-box; border-right: 1px solid #d0d0d0; background: linear-gradient(#eee, #eee) right / 4px 100% no-repeat, #fff; }
.ptitle { display: flex; flex: none; align-items: center; justify-content: space-between; height: 20px; padding: 0 2px; background: #eee; }
.type { display: flex; flex: none; align-items: center; justify-content: space-between; height: 70px; padding: 0 2px; background: linear-gradient(#f7f7f7, #e6e6e6); }
.thumb { width: 65px; height: 65px; }
.filter { display: flex; flex: none; height: 22px; background: #eee; }
.combo { display: flex; align-items: center; width: 301px; box-sizing: border-box; border: 1px solid #aaa; background: #e1e1e1; padding-right: 4px; }
.combo select { flex: 1; height: 20px; padding: 0 3px; border: 0; background: none; appearance: none; font: inherit; color: #2a2a2a; }
.filter button { gap: 4px; padding-left: 4px; color: #aaa; }
table { width: 100%; border-collapse: collapse; table-layout: fixed; color: #2a2a2a; border-top: 1px solid #ddd; }
.c1 { width: 189px; } .c3 { width: 12px; }
tr { height: 19px; }
th, td { height: 18px; padding: 0; border: 1px dotted #b0b0b0; border-left: 0; border-top: 0; font-weight: 400; text-align: left; line-height: 18px; white-space: nowrap; }
th { padding-left: 8px; }
th.off { color: #888; }
td { padding-left: 2px; }
.group th { padding: 0 5px 0 2px; border-right: 0; border-color: #dcdcdc; background: #dcdcdc; }
.group div { display: flex; justify-content: space-between; }
.group svg { margin-top: 3px; }
.boxed { outline: 1px solid #333; outline-offset: -1px; }
.btn { background: #e1e1e1; border: 1px solid #aaa; }
.docs { display: flex; flex: 1; min-width: 0; flex-direction: column; }
.doctabs { display: flex; flex: none; height: 20px; color: #555; }
.doctabs button { justify-content: flex-start; gap: 8px; padding-left: 5px; }
.doctabs .t1 { width: 128px; }
.doctabs .t2 { width: 148px; }
.doctabs .t1 svg, .doctabs .t2 svg, .doctabs .t4 svg { opacity: 0.5; }
.doctabs .active { width: 220px; box-sizing: border-box; padding-right: 4px; background: #fff; font-weight: 700; color: #333; }
.doctabs .active span + svg { margin-left: auto; }
.doctabs .all { margin-left: auto; padding: 0 3px 0 0; }
.viewport { display: flex; flex: 1; min-height: 0; background: #fff; }
.canvas { position: relative; flex: 1; min-width: 0; overflow: hidden; border-left: 1px solid #e0e0e0; }
.drawing { display: block; width: 100%; }
.navbar { position: absolute; top: 3px; right: 1px; }
.scroll { display: flex; flex-direction: column; flex: none; width: 15px; background: #f0f0f0; }
.scroll svg { margin: 5px auto 0 2px; }
.scroll i { flex: none; height: 17px; margin: auto 0 3px; background: #cdcdcd; }
.scroll.tall { width: 15px; }
.scroll.tall i { height: 238px; margin: 4px 0 0; }
.browser { display: flex; flex-direction: column; flex: none; width: 314px; box-sizing: border-box; border-left: 4px solid #d8d8d8; background: #fff; }
.browser .ptitle { padding-left: 4px; }
.bbody { display: flex; flex: 1; min-height: 0; }
ul { flex: 1; min-width: 0; margin: 0; padding: 0; overflow: hidden; list-style: none; color: #1c1c1c; }
li { display: flex; align-items: center; height: 18px; overflow: hidden; white-space: nowrap; }
li:nth-child(5n + 3), li:nth-child(5n) { height: 17px; }
.cell { flex: none; }
.cell + svg:not(.cell) { margin-left: 1px; }
li span { padding: 0 3px; margin-left: 2px; line-height: 17px; }
li .plain { margin-left: 4px; }
.sel { background: #e3e3e3; }
.bold { font-weight: 700; }
.marks { position: absolute; inset: 0 auto auto -1px; width: 100vw; pointer-events: none; }
</style>
